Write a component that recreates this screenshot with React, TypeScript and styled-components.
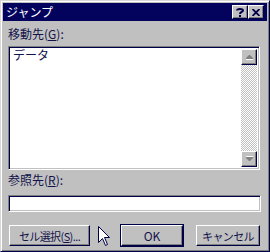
import styled, { createGlobalStyle } from "styled-components";

const GlobalStyle = createGlobalStyle`
   html, body {
      margin: 0;
      padding: 0;
      background: #c0c0c0;
   }
   * {
      box-sizing: border-box;
   }
`;

const ink = "#12124a";
const dark = "#000048";
const face = "#c0c0c0";
const shadow = "#808080";

const Window = styled.div`
   position: relative;
   width: 270px;
   height: 252px;
   background: ${face};
   border-top: 1px solid #d8d8d8;
   border-left: 1px solid #d8d8d8;
   border-right: 1px solid ${dark};
   border-bottom: 1px solid ${dark};
   box-shadow: inset 1px 1px 0 #ffffff, inset -1px -1px 0 ${shadow};
   padding: 2px;
   display: flex;
   flex-direction: column;
   font-family: "Noto Sans CJK JP", "Liberation Sans", sans-serif;
   font-size: 12px;
   color: ${ink};
`;

const TitleBar = styled.div`
   height: 18px;
   background: #03035e;
   display: flex;
   align-items: center;
   padding: 0 3px 0 3px;
`;

const Title = styled.div`
   flex: 1;
   color: #ffffff;
   font-size: 12px;
   line-height: 18px;
`;

const RaisedButton = styled.div`
   background: ${face};
   border-top: 1px solid #ffffff;
   border-left: 1px solid #ffffff;
   border-right: 1px solid ${dark};
   border-bottom: 1px solid ${dark};
   box-shadow: inset -1px -1px 0 ${shadow};
   display: flex;
   align-items: center;
   justify-content: center;
`;

const CaptionButton = styled(RaisedButton)<{ $gap?: number }>`
   width: 16px;
   height: 14px;
   margin-left: ${(p) => p.$gap ?? 0}px;
`;

const Body = styled.div`
   flex: 1;
   display: flex;
   flex-direction: column;
   padding: 4px 6px 0 5px;
`;

const Label = styled.div<{ $top?: number }>`
   line-height: 14px;
   height: 14px;
   margin-top: ${(p) => p.$top ?? 0}px;
   white-space: nowrap;
`;

const Key = styled.span`
   text-decoration: underline;
   text-underline-offset: 1px;
`;

const Sunken = styled.div`
   border-top: 1px solid ${shadow};
   border-left: 1px solid ${shadow};
   border-right: 1px solid #ffffff;
   border-bottom: 1px solid #ffffff;
   box-shadow: inset 1px 1px 0 ${dark}, inset -1px -1px 0 ${face};
   background: #ffffff;
`;

const ListBox = styled(Sunken)`
   margin-top: 5px;
   width: 252px;
   height: 124px;
   padding: 2px;
   display: flex;
`;

const ListItems = styled.div`
   flex: 1;
   padding: 0 0 0 2px;
   line-height: 12px;
`;

const ScrollBar = styled.div`
   width: 16px;
   display: flex;
   flex-direction: column;
`;

const ScrollArrow = styled(RaisedButton)`
   width: 16px;
   height: 16px;
`;

const ScrollTrack = styled.div`
   flex: 1;
   background-color: #ffffff;
   background-image: conic-gradient(
      ${face} 25%,
      #ffffff 0 50%,
      ${face} 0 75%,
      #ffffff 0
   );
   background-size: 2px 2px;
`;

const TextInput = styled(Sunken)`
   margin-top: 8px;
   width: 253px;
   height: 17px;
`;

const ButtonRow = styled.div`
   margin-top: 13px;
   display: flex;
   align-items: flex-start;
`;

const PushButton = styled(RaisedButton)<{ $width: number; $gap?: number }>`
   width: ${(p) => p.$width}px;
   height: 21px;
   margin-left: ${(p) => p.$gap ?? 0}px;
   font-size: 11px;
   letter-spacing: -0.6px;
   white-space: nowrap;
`;

const DefaultButton = styled(PushButton)`
   outline: 1px solid ${dark};
   font-size: 12px;
   letter-spacing: 0;
`;

const Cursor = styled.svg`
   position: absolute;
   left: 97px;
   top: 225px;
`;

const Arrow = ({ up }: { up: boolean }) => (
   <svg width="9" height="6" viewBox="0 0 9 6">
      <g transform={up ? "" : "rotate(180 4.5 3)"}>
         <path d="M1 5 L8 5 L8 6 L1 6 Z" fill="#ffffff" />
         <path d="M4 1 L5 1 L8 4 L8 5 L1 5 L1 4 Z" fill={shadow} />
      </g>
   </svg>
);

const App = () => {
   return (
      <>
         <GlobalStyle />
         <Window>
            <TitleBar>
               <Title>ジャンプ</Title>
               <CaptionButton>
                  <svg width="8" height="9" viewBox="0 0 8 9">
                     <path
                        d="M1 2.5 C1 0.5 7 0.5 7 2.5 C7 4 4 4 4 6"
                        stroke={dark}
                        strokeWidth="2"
                        fill="none"
                     />
                     <rect x="3" y="7" width="2" height="2" fill={dark} />
                  </svg>
               </CaptionButton>
               <CaptionButton $gap={0}>
                  <svg width="8" height="7" viewBox="0 0 8 7">
                     <path d="M0.5 0 L7.5 7 M7.5 0 L0.5 7" stroke={dark} strokeWidth="1.8" />
                  </svg>
               </CaptionButton>
            </TitleBar>
            <Body>
               <Label $top={2}>
                  移動先(<Key>G</Key>):
               </Label>
               <ListBox>
                  <ListItems>データ</ListItems>
                  <ScrollBar>
                     <ScrollArrow>
                        <Arrow up />
                     </ScrollArrow>
                     <ScrollTrack />
                     <ScrollArrow>
                        <Arrow up={false} />
                     </ScrollArrow>
                  </ScrollBar>
               </ListBox>
               <Label $top={3}>
                  参照先(<Key>R</Key>):
               </Label>
               <TextInput />
               <ButtonRow>
                  <PushButton $width={81} $gap={1}>
                     セル選択(<Key>S</Key>)...
                  </PushButton>
                  <DefaultButton $width={62} $gap={31}>
                     OK
                  </DefaultButton>
                  <PushButton $width={64} $gap={13}>
                     キャンセル
                  </PushButton>
               </ButtonRow>
            </Body>
            <Cursor width="12" height="20" viewBox="0 0 12 20">
               <path
                  d="M0.5 0.5 L0.5 16.5 L4.5 12.5 L7.5 19.5 L9.5 18.5 L6.5 11.5 L11.5 11.5 Z"
                  fill="#ffffff"
                  stroke={dark}
                  strokeWidth="1"
               />
            </Cursor>
         </Window>
      </>
   );
};

export default App;
